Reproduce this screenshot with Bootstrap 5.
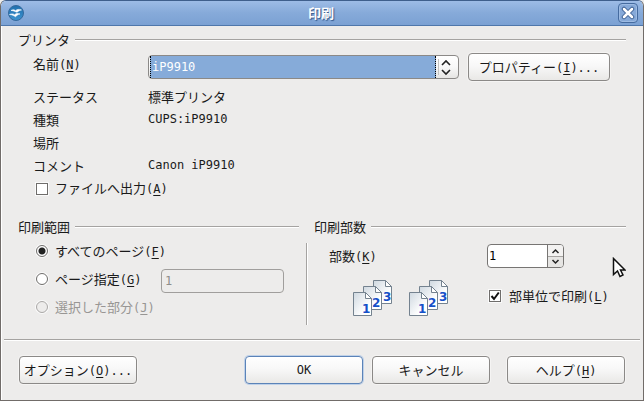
<!DOCTYPE html>
<html lang="ja">
<head>
<meta charset="utf-8">
<meta name="viewport" content="width=device-width, initial-scale=1">
<title>印刷</title>
<link href="https://cdn.jsdelivr.net/npm/bootstrap@5.3.0/dist/css/bootstrap.min.css" rel="stylesheet">
<style>
body{font-family:"Noto Sans CJK JP",sans-serif;font-size:13px;line-height:20px;color:#1a1a1a;background:#edeceb}
.latin{font-family:"DejaVu Sans Mono",monospace;font-size:12px}
u{text-underline-offset:2px;text-decoration-thickness:1px}
.dialog-window{border:1px solid #716c69;border-top-color:#3f5f8c;border-radius:6px 6px 0 0;box-shadow:inset 1px 0 #fff;background:#edeceb;overflow:hidden}
.title-strip{height:25px;padding:0 5px 0 7px;background:linear-gradient(#9dbce6,#86aad9 50%,#7ba1d3);border-bottom:1px solid #4f77ab}
.title-strip h1{font-size:13px;line-height:24px;font-weight:700;color:#fff;text-shadow:1px 1px 1px #34598c}
.close-btn{width:20px;height:20px;border:1px solid #456b9f;border-radius:4px;background:#86a9d8;box-shadow:inset 0 0 0 1px #9dbbe3}
.dialog-main{padding:4px 17px 9px}
.group-title{font-size:13px;line-height:20px;gap:5px}
.group-title::after{content:"";flex:1;height:2px;background:#a5a3a1;border-bottom:1px solid #fff}
.printer-fields{padding:3px 15px 0}
.name-row{height:28px;margin-bottom:4px}
.field-name{width:115px;flex:none}
.name-row .field-name{line-height:22px}
.info-line,.check-line{line-height:23px;height:23px}
.face{height:28px;padding:0;border:1px solid #8b8987;border-radius:4px;font-size:13px;line-height:20px;color:#1a1a1a;background:linear-gradient(#fff,#f8f8f8 45%,#e9e8e6);box-shadow:0 0 0 1px #f5f4f3}
.face:hover{border-color:#6b8fc2;color:#1a1a1a}
.face-default{border-color:#5b83b8;box-shadow:0 0 0 1px #bfd1e8}
.face-default.latin{font-size:12px}
.props-btn{width:142px;margin:0 1px 0 9px}
.foot-btn{width:118px}
.combo{height:24px;border:1px solid #8b8987;border-radius:4px;background:linear-gradient(#fff,#f8f8f8 50%,#e6e5e3);padding-left:1px}
.combo select{appearance:none;border:0;border-left:1px dotted #000;border-right:1px dotted #000;background:#86abd9;color:#fff;padding:0 0 0 1px;height:22px;border-radius:0;outline:0}
.combo svg{width:22px;height:22px;flex:none}
.tick,.pick{appearance:none;width:12px;height:12px;margin:0;border:1px solid #6f6d6b;background:#fff;box-shadow:0 0 0 1px #fafafa;flex:none}
.pick{border-radius:50%}
.pick:checked{background:radial-gradient(circle,#222 0 3px,#fff 4px)}
.pick:disabled{border-color:#aaa8a6;background:#edeceb}
.tick:checked{background:#fff url("data:image/svg+xml,%3Csvg xmlns='http://www.w3.org/2000/svg' viewBox='0 0 10 10'%3E%3Cpath d='M1.5 5 4 8 8.8 1.5' fill='none' stroke='%23111' stroke-width='2'/%3E%3C/svg%3E")}
.check-line,.radio-line{gap:7px;padding-left:3px}
.lower{display:grid;grid-template-columns:minmax(0,9fr) 15px minmax(0,10fr);margin-top:17px}
.split-line{width:2px;background:#a5a3a1;border-right:1px solid #fff;margin:26px 6px 0 7px}
.range-fields{padding:0 15px 4px}
.radio-line{height:28px}
.radio-line label{line-height:28px}
.range-box{height:24px;width:123px;border:1px solid #a09e9c;border-radius:4px;background:#edeceb;color:#8f8d8b;padding:0 3px}
.off{color:#989694}
.copies{padding:7px 15px 0}
.spin{width:77px;height:24px;border:1px solid #777573;border-radius:4px;background:#fff;margin-right:47px}
.spin input{appearance:textfield;-moz-appearance:textfield;border:0;background:none;padding:0 0 0 1px;min-width:0;outline:0}
.spin input::-webkit-inner-spin-button{display:none}
.spin-keys{width:16px;border-left:1px solid #777573}
.spin-keys button{height:11px;border:0;padding:0;background:#f3f2f1;line-height:0}
.spin-keys button+button{border-top:1px solid #a5a3a1;background:#e6e5e3}
.collate-line{margin-top:12px;height:36px}
.sheets{gap:16px;margin-left:24px}
.sheets svg{width:40px;height:37px;fill:#1550c8;font:bold 12px "DejaVu Sans",sans-serif}
.collate-check{gap:8px;height:32px;width:122px}
.foot{margin:0 3px;padding:16px 15px;border-top:1px solid #a5a3a1;box-shadow:inset 0 1px #fff}
.foot-main{gap:9px;margin-right:17px}
.pointer{position:absolute;left:612px;top:257px}
</style>
<script src="https://cdn.jsdelivr.net/npm/bootstrap@5.3.0/dist/js/bootstrap.bundle.min.js"></script>
</head>
<body>
<svg width="0" height="0" class="position-absolute" aria-hidden="true">
<defs>
<linearGradient id="paper" x1="0" y1="0" x2="1" y2="1"><stop offset="0" stop-color="#cfd8e0"/><stop offset=".7" stop-color="#fff"/></linearGradient>
<linearGradient id="orb" x1="0" y1="0" x2="0" y2="1"><stop offset="0" stop-color="#1f6fae"/><stop offset="1" stop-color="#3d93cf"/></linearGradient>
<symbol id="sheet" viewBox="0 0 20 25"><path d="M.5.5h12l6 6v17H.5z" fill="url(#paper)" stroke="#74828f"/><path d="M12.500.5v6h6z" fill="#fff" stroke="#74828f"/></symbol>
<symbol id="stack" viewBox="0 0 40 37">
<use href="#sheet" x="20" y="0" width="20" height="25"/><text x="30" y="21">3</text>
<use href="#sheet" x="10" y="6" width="20" height="25"/><text x="19" y="27">2</text>
<use href="#sheet" x="0" y="12" width="20" height="25"/><text x="9" y="33">1</text>
</symbol>
</defs>
</svg>
<div class="dialog-window d-flex flex-column min-vh-100">
<header class="title-strip d-flex align-items-center">
<svg width="16" height="16" viewBox="0 0 16 16" aria-hidden="true"><circle cx="8" cy="8" r="7.500" fill="url(#orb)" stroke="#35699c"/><path d="M3 5.500c2-1.200 3.500-.8 4.500.2 1.500-1.500 3.500-1.700 6-.7-2 .2-3 1-4.500 2.300C7 6.500 5 5.500 3 5.500zM1.500 9.500c2.500-1 4-.6 5 .3 1.500-1.500 3.500-1.600 5.500-.8-2 .3-3 1.400-4.500 2.700C5.500 10.500 4 9.600 1.500 9.500z" fill="#fff" stroke="#fff" stroke-width=".6"/></svg>
<h1 class="flex-grow-1 text-center m-0">印刷</h1>
<button type="button" class="close-btn p-0 d-flex align-items-center justify-content-center" aria-label="閉じる"><svg width="14" height="14" viewBox="0 0 14 14"><path d="M3 3l8 8M11 3l-8 8" stroke="#416496" stroke-width="4.500" stroke-linecap="round"/><path d="M3 3l8 8M11 3l-8 8" stroke="#fff" stroke-width="2.500" stroke-linecap="round"/></svg></button>
</header>
<form class="flex-grow-1 d-flex flex-column">
<main class="dialog-main flex-grow-1">
<section>
<h2 class="group-title d-flex align-items-center m-0 fw-normal">プリンタ</h2>
<div class="printer-fields">
<div class="name-row d-flex align-items-center">
<label class="field-name align-self-start" for="printer">名前<span class="latin">(<u>N</u>)</span></label>
<div class="combo d-flex flex-grow-1"><select id="printer" class="latin flex-grow-1"><option>iP9910</option></select><svg viewBox="0 0 22 22" aria-hidden="true"><path d="M2.500 3v16" stroke="#c4c2c0"/><path d="M6 9l4-4 4 4M6 14l4 4 4-4" fill="none" stroke="#222" stroke-width="1.600"/></svg></div>
<button type="button" class="btn face props-btn">プロパティー<span class="latin">(<u>I</u>)...</span></button>
</div>
<div class="info-line d-flex"><span class="field-name">ステータス</span><span>標準プリンタ</span></div>
<div class="info-line d-flex"><span class="field-name">種類</span><span class="latin">CUPS:iP9910</span></div>
<div class="info-line d-flex"><span class="field-name">場所</span></div>
<div class="info-line d-flex"><span class="field-name">コメント</span><span class="latin">Canon iP9910</span></div>
<div class="check-line d-flex align-items-center"><input class="tick" type="checkbox" id="tofile"><label for="tofile">ファイルへ出力<span class="latin">(<u>A</u>)</span></label></div>
</div>
</section>
<div class="lower">
<section>
<h2 class="group-title d-flex align-items-center m-0 fw-normal">印刷範囲</h2>
<div class="range-fields">
<div class="radio-line d-flex align-items-center"><input class="pick" type="radio" name="range" id="all" checked><label for="all">すべてのページ<span class="latin">(<u>F</u>)</span></label></div>
<div class="radio-line d-flex align-items-center"><input class="pick" type="radio" name="range" id="pages"><label for="pages">ページ指定<span class="latin">(<u>G</u>)</span></label><input class="range-box latin ms-auto align-self-end" type="text" value="1" disabled aria-label="ページ指定"></div>
<div class="radio-line off d-flex align-items-center"><input class="pick" type="radio" name="range" id="selection" disabled><label for="selection">選択した部分<span class="latin">(<u>J</u>)</span></label></div>
</div>
</section>
<div class="split-line"></div>
<section>
<h2 class="group-title d-flex align-items-center m-0 fw-normal">印刷部数</h2>
<div class="copies">
<div class="d-flex align-items-center justify-content-between"><label for="copies">部数<span class="latin">(<u>K</u>)</span></label>
<div class="spin d-flex overflow-hidden"><input class="latin flex-grow-1" type="number" id="copies" value="1" min="1"><div class="spin-keys d-flex flex-column flex-shrink-0"><button type="button" aria-label="増やす"><svg width="9" height="6" viewBox="0 0 9 6"><path d="M1.500 5l3-3 3 3" fill="none" stroke="#222" stroke-width="1.500"/></svg></button><button type="button" aria-label="減らす"><svg width="9" height="6" viewBox="0 0 9 6"><path d="M1.500 1l3 3 3-3" fill="none" stroke="#222" stroke-width="1.500"/></svg></button></div></div></div>
<div class="collate-line d-flex justify-content-between">
<div class="sheets d-flex"><svg aria-hidden="true"><use href="#stack" width="40" height="37"/></svg><svg aria-hidden="true"><use href="#stack" width="40" height="37"/></svg></div>
<div class="collate-check d-flex align-items-center"><input class="tick" type="checkbox" id="collate" checked><label class="text-nowrap" for="collate">部単位で印刷<span class="latin">(<u>L</u>)</span></label></div>
</div>
</div>
</section>
</div>
</main>
<footer class="foot d-flex">
<button type="button" class="btn face foot-btn me-auto">オプション<span class="latin">(<u>O</u>)...</span></button>
<div class="foot-main d-flex">
<button type="submit" class="btn face face-default foot-btn latin">OK</button>
<button type="button" class="btn face foot-btn">キャンセル</button>
</div>
<button type="button" class="btn face foot-btn">ヘルプ<span class="latin">(<u>H</u>)</span></button>
</footer>
</form>
</div>
<svg class="pointer" width="14" height="21" viewBox="0 0 14 21" aria-hidden="true"><path d="M1.500 1.500v16l4-3.500 2.500 5.500 3-1.500-2.500-5h4.500z" fill="#fff" stroke="#111" stroke-width="1.500"/></svg>
</body>
</html>
